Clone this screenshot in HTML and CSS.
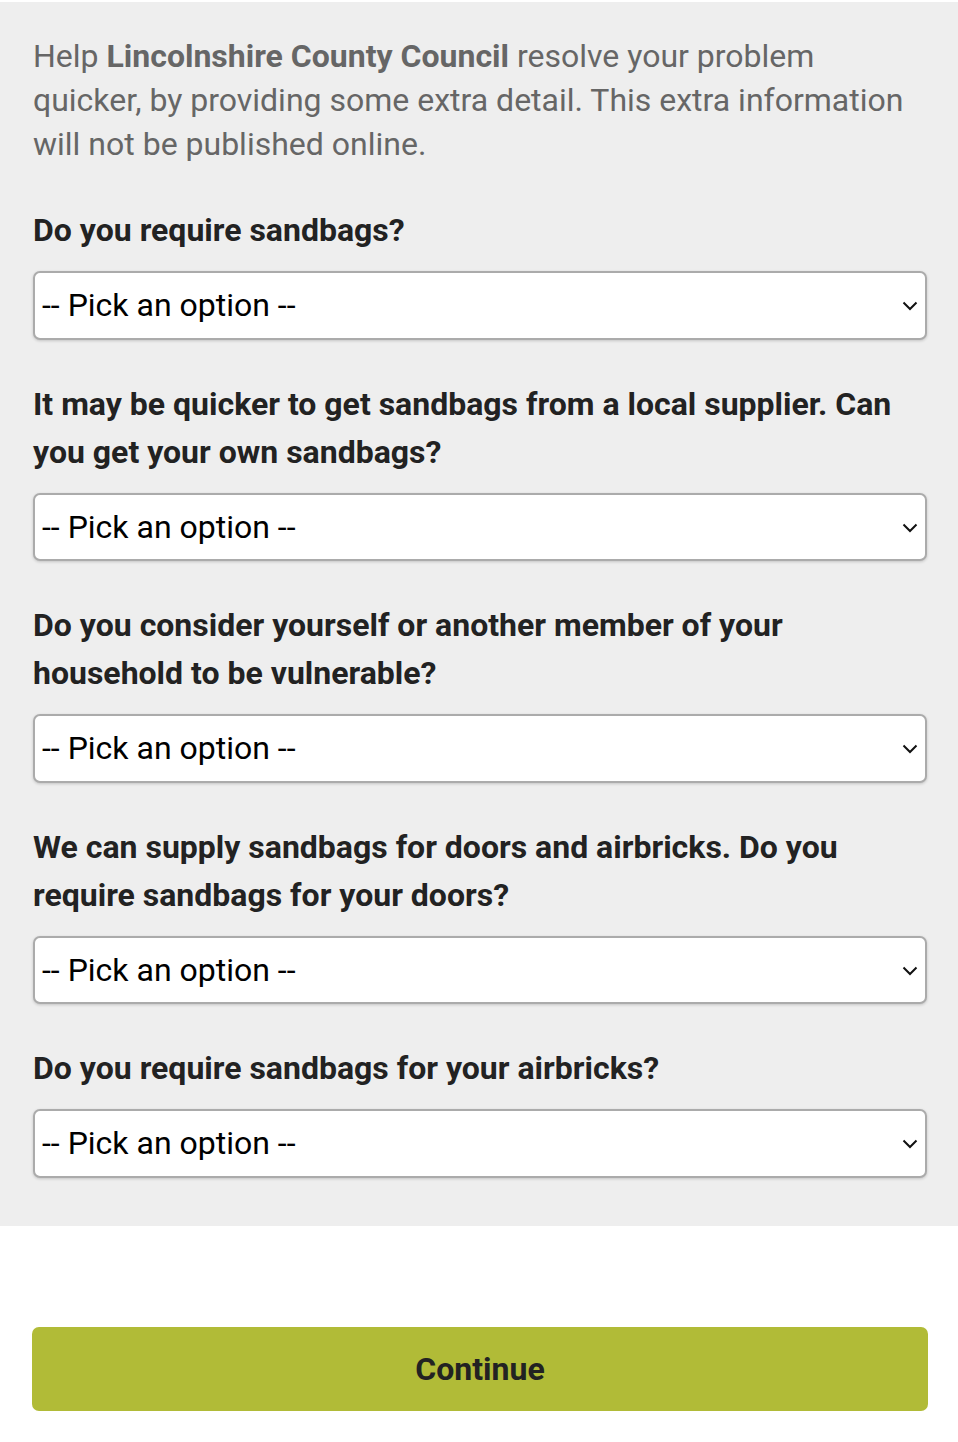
FILE: index.html
```html
<!DOCTYPE html>
<html lang="en">
<head>
<meta charset="utf-8">
<title>Extra details</title>
<link rel="stylesheet" href="styles.css">
</head>
<body>
<div class="panel">
  <p class="intro">Help <strong>Lincolnshire County Council</strong> resolve your problem quicker, by providing some extra detail. This extra information will not be published online.</p>

  <div class="field">
    <label class="label">Do you require sandbags?</label>
    <div class="select"><span>-- Pick an option --</span><svg class="chev" viewBox="0 0 16 10" width="16" height="10"><path d="M1.5 1.5 L8 8 L14.5 1.5" fill="none" stroke="#111" stroke-width="2"/></svg></div>
  </div>

  <div class="field">
    <label class="label">It may be quicker to get sandbags from a local supplier. Can you get your own sandbags?</label>
    <div class="select"><span>-- Pick an option --</span><svg class="chev" viewBox="0 0 16 10" width="16" height="10"><path d="M1.5 1.5 L8 8 L14.5 1.5" fill="none" stroke="#111" stroke-width="2"/></svg></div>
  </div>

  <div class="field">
    <label class="label">Do you consider yourself or another member of your household to be vulnerable?</label>
    <div class="select"><span>-- Pick an option --</span><svg class="chev" viewBox="0 0 16 10" width="16" height="10"><path d="M1.5 1.5 L8 8 L14.5 1.5" fill="none" stroke="#111" stroke-width="2"/></svg></div>
  </div>

  <div class="field">
    <label class="label">We can supply sandbags for doors and airbricks. Do you require sandbags for your doors?</label>
    <div class="select"><span>-- Pick an option --</span><svg class="chev" viewBox="0 0 16 10" width="16" height="10"><path d="M1.5 1.5 L8 8 L14.5 1.5" fill="none" stroke="#111" stroke-width="2"/></svg></div>
  </div>

  <div class="field">
    <label class="label">Do you require sandbags for your airbricks?</label>
    <div class="select"><span>-- Pick an option --</span><svg class="chev" viewBox="0 0 16 10" width="16" height="10"><path d="M1.5 1.5 L8 8 L14.5 1.5" fill="none" stroke="#111" stroke-width="2"/></svg></div>
  </div>
</div>

<div class="actions">
  <button class="continue" type="button">Continue</button>
</div>
</body>
</html>
```

FILE: styles.css
```css
html, body {
  margin: 0;
  padding: 0;
  background: #fff;
}
body {
  font-family: Roboto, "Liberation Sans", Arial, sans-serif;
  padding-top: 2px;
}
.panel {
  background: #eeeeee;
  padding: 32px 31px 48px 33px;
}
.intro {
  margin: 0;
  font-size: 32px;
  line-height: 44px;
  color: #666666;
}
.intro strong {
  font-weight: 700;
}
.field {
  margin-top: 40px;
}
.label {
  display: block;
  font-size: 32px;
  line-height: 48px;
  font-weight: 700;
  color: #222222;
  margin-bottom: 17px;
}
.select {
  box-sizing: border-box;
  height: 68.5px;
  background: #fff;
  border: 2px solid #ababab;
  border-radius: 7px;
  box-shadow: 0 1px 3px rgba(0,0,0,0.18);
  display: flex;
  align-items: center;
  justify-content: space-between;
  padding: 0 7px 0 7px;
  font-size: 32px;
  color: #000;
}
.chev {
  display: block;
  margin-top: 2px;
}
.actions {
  padding: 101px 30px 0 32px;
}
.continue {
  display: block;
  width: 100%;
  height: 84px;
  border: none;
  border-radius: 7px;
  background: #b1bb37;
  color: #222;
  font-family: Roboto, "Liberation Sans", Arial, sans-serif;
  font-weight: 700;
  font-size: 32px;
  cursor: pointer;
}
```
